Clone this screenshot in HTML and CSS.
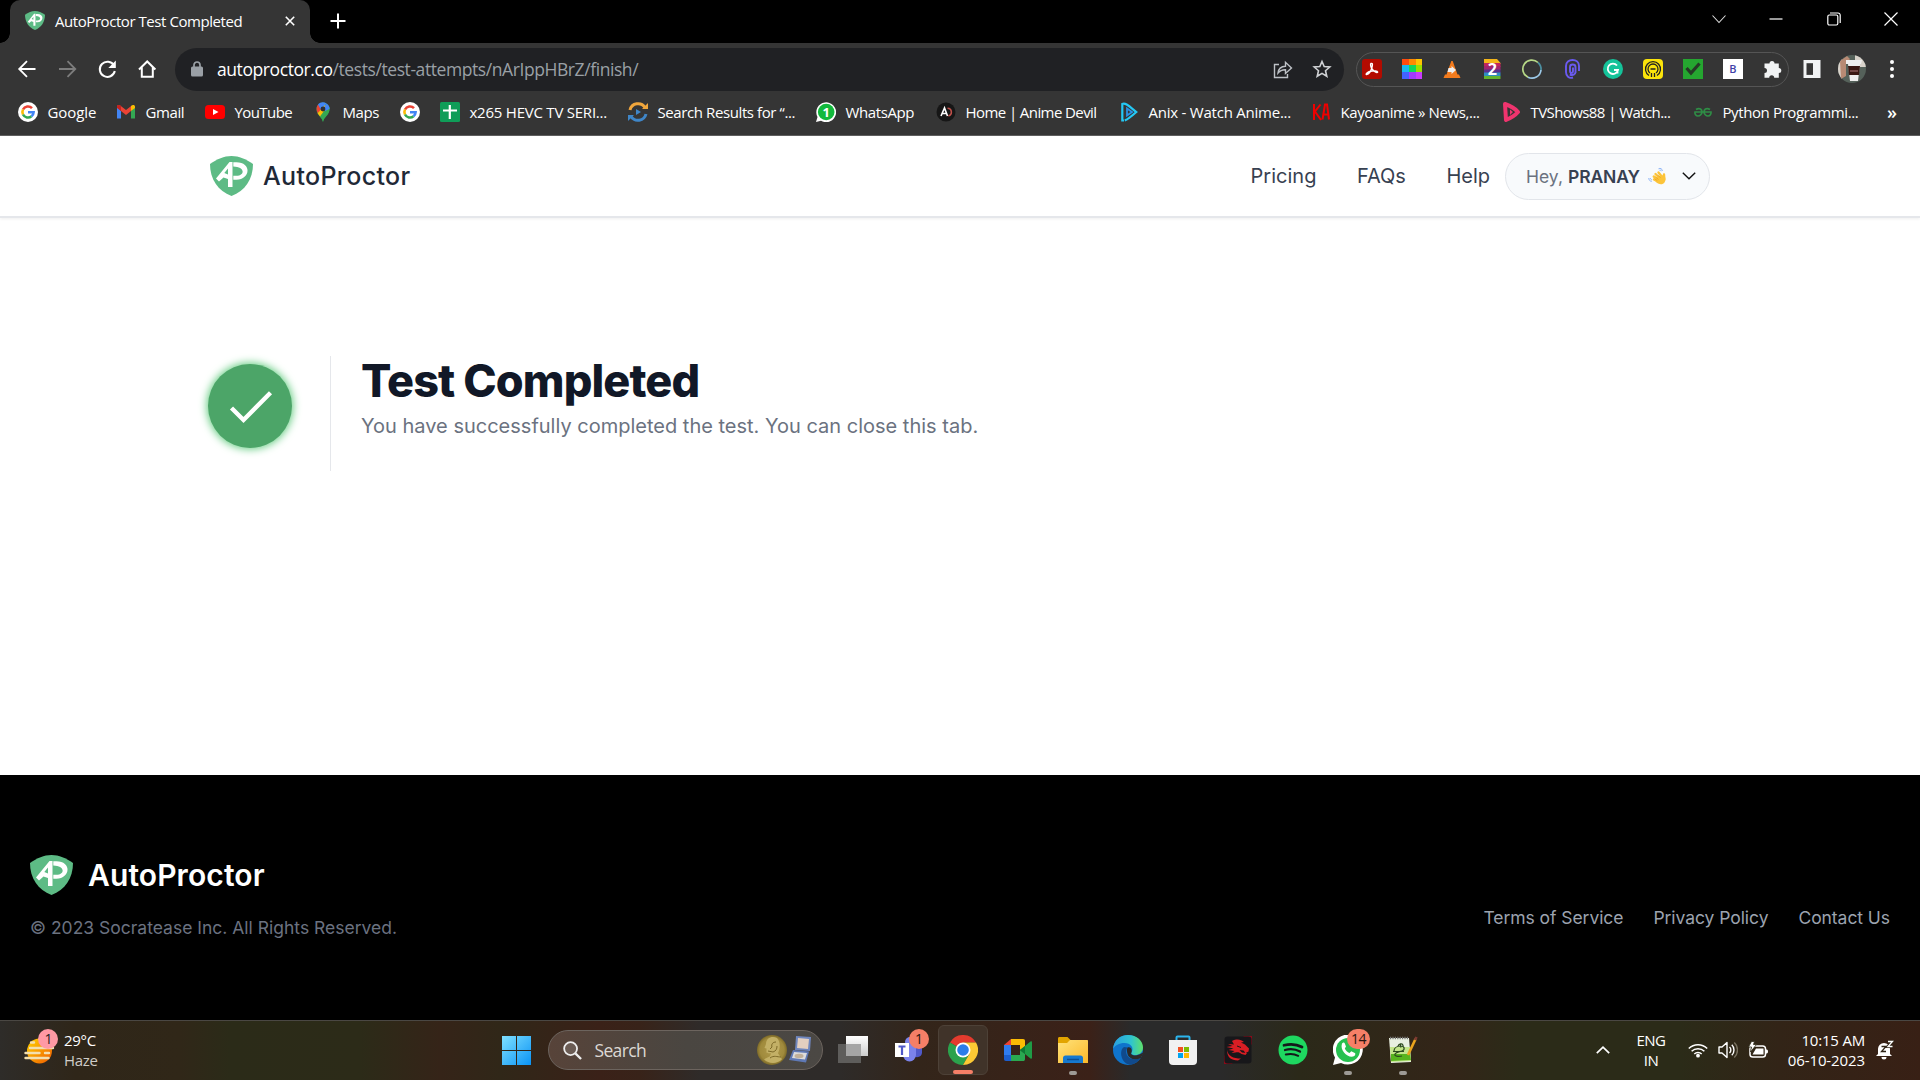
FILE: index.html
```html
<!DOCTYPE html>
<html lang="en">
<head>
<meta charset="utf-8">
<title>AutoProctor Test Completed</title>
<link rel="stylesheet" href="styles.css">
</head>
<body>
<svg class="defs" aria-hidden="true">
  <defs>
    <symbol id="shield" viewBox="0 0 43 40">
      <path d="M0 8C7 3 14 0 21.500 0S36 3 43 8c0 15-8 27-21.500 32C8 35 0 23 0 8z" fill="#5dbb85"/>
      <path d="M19.500 6h3v25H18v-8l-4.500-1.500-4.500 4-3-3zM18 12.500 14.300 17l3.700 1.500z" fill="#fff" fill-rule="evenodd"/>
      <path d="M23.300 6.200h3c15.500 0 14.500 17 0 17.600h-3v-4h3c9-.3 9-9-3-9.400z" fill="#fff"/>
    </symbol>
    <symbol id="google" viewBox="0 0 20 20">
      <circle cx="10" cy="10" r="10" fill="#fff"/>
      <g fill="none" stroke-width="2.600"><path d="M14 6.200A5.600 5.600 0 0 0 5 7.500" stroke="#ea4335"/><path d="M5 7.500a5.600 5.600 0 0 0 0 5" stroke="#fbbc05"/><path d="M5 12.500a5.600 5.600 0 0 0 8.500 1.800" stroke="#34a853"/><path d="M10 10.200h5.600a5.600 5.600 0 0 1-2.100 4.100" stroke="#4285f4"/></g>
    </symbol>
    <symbol id="chrome" viewBox="0 0 30 30">
      <path d="M15 15 2 7.500A15 15 0 0 1 28 7.500H15z" fill="#e33b2e"/>
      <path d="M15 15 2 7.500A15 15 0 0 0 15 30l6.500-11.200z" fill="#2ba24c"/>
      <path d="M15 7.500h13A15 15 0 0 1 15 30l6.500-11.200z" fill="#fcc934"/>
      <circle cx="15" cy="15" r="7.500" fill="#fff"/><circle cx="15" cy="15" r="5.800" fill="#2b7de9"/>
    </symbol>
  </defs>
</svg>

<div class="tabstrip">
  <div class="tab">
    <svg class="tab-icon" viewBox="0 0 43 40" preserveAspectRatio="none"><use href="#shield"/></svg>
    <span class="tab-title">AutoProctor Test Completed</span>
    <svg class="tab-close" viewBox="0 0 10 10"><path d="M.8.8l8.400 8.400M9.200.8.8 9.200" stroke="#fff" stroke-width="1.600"/></svg>
  </div>
  <svg class="tab-new" viewBox="0 0 16 16"><path d="M8 .5v15M.5 8h15" stroke="#fff" stroke-width="2"/></svg>
  <div class="window-controls">
    <svg viewBox="0 0 14 14"><path d="M.5 3.500 7 10.500l6.500-7" fill="none" stroke="#ddd" stroke-width="1.100"/></svg>
    <svg viewBox="0 0 14 14"><path d="M.5 7h13" stroke="#fff" stroke-width="1.200"/></svg>
    <svg viewBox="0 0 14 14"><g fill="none" stroke="#fff" stroke-width="1.200"><rect x=".8" y="3" width="10" height="10" rx="1.500"/><path d="M3 1h8a2.200 2.200 0 0 1 2.200 2.200V11"/></g></svg>
    <svg viewBox="0 0 14 14"><path d="M.5.5l13 13M13.500.5l-13 13" stroke="#fff" stroke-width="1.200"/></svg>
  </div>
</div>

<div class="toolbar">
  <svg class="tool" viewBox="0 0 40 40"><path d="M28.500 20h-16M20 12.200 12.200 20l7.800 7.800" fill="none" stroke="#fff" stroke-width="1.800"/></svg>
  <svg class="tool" viewBox="0 0 40 40"><path d="M12 20h16M20.500 12.200 28.300 20l-7.800 7.800" fill="none" stroke="#7d7d7d" stroke-width="1.800"/></svg>
  <svg class="tool" viewBox="0 0 40 40"><path d="M27 16.500A7.600 7.600 0 1 0 27.800 22" fill="none" stroke="#fff" stroke-width="2"/><path d="M28.800 11.500v7.500h-7.500z" fill="#fff"/></svg>
  <svg class="tool" viewBox="0 0 40 40"><path d="M12 20.500 20.200 12.500l8.200 8M14.800 18.500v9.300h11v-9.300" fill="none" stroke="#fff" stroke-width="2"/></svg>
  <div class="omnibox">
    <svg class="lock" viewBox="0 0 12 16"><rect y="5.500" width="12" height="10" rx="1.500" fill="#9aa0a6"/><path d="M3 6V4a3 3 0 0 1 6 0v2" fill="none" stroke="#9aa0a6" stroke-width="1.700"/></svg>
    <span class="url">autoproctor.co<span class="path">/tests/test-attempts/nArIppHBrZ/finish/</span></span>
    <svg class="omni-icon" viewBox="0 0 20 20"><path d="M6 5.500H1.500v13h13V15M5 14c.5-4.500 3.500-6.500 7.500-6.700V3.300L18.500 9l-6 5.500V10.700C9 10.600 7 11.500 5 14z" fill="none" stroke="#bdc1c6" stroke-width="1.400"/></svg>
    <svg class="omni-icon" viewBox="0 0 20 20"><path d="m10 2.500 2.200 5 5.600.5-4.300 3.700 1.300 5.600L10 14.400l-4.800 2.900 1.300-5.600L2.200 8l5.600-.5z" fill="none" stroke="#d0d2d5" stroke-width="1.600"/></svg>
  </div>
  <div class="extensions">
    <svg viewBox="0 0 24 24"><rect x="2" y="2" width="20" height="20" rx="3" fill="#b30b00"/><path d="M11 6.500c2-.5 1.500 2 .8 4.500C11 14 8.500 17 6.500 17.500c-1.200-.5 1-2.500 4-3.200 3.500-.8 7-.5 7.200.7-.5 1.500-4-.5-5.700-3C10.700 9.500 10 7 11 6.500z" fill="none" stroke="#fff" stroke-width="1.400"/></svg>
    <svg viewBox="0 0 24 24"><path fill="#ff4b0f" d="M2 2h7v7H2z"/><path fill="#ff8a00" d="M9 2h7v6H9z"/><path fill="#ffc400" d="M16 2h6v6h-6z"/><path fill="#18b8f0" d="M2 8h7v7H2z"/><path fill="#12d65c" d="M9 8h7v7H9z"/><path fill="#9be000" d="M16 8h6v7h-6z"/><path fill="#4263ff" d="M2 15h7v7H2z"/><path fill="#a13cff" d="M9 15h7v7H9z"/><path fill="#c93cff" d="M16 15h6v7h-6z"/></svg>
    <svg viewBox="0 0 24 24"><path d="M11.300 4h1.400l4.800 13.500h1.500l1.500 3.500H3.500L5 17.500h1.500z" fill="#f37b1d"/><path d="M8.500 11h3V9l4.500 4-4.500 4v-2H7.500z" fill="#eee"/></svg>
    <svg viewBox="0 0 24 24"><path fill="#f4b61a" d="M4 2h13l3.500 4v1H4z"/><path fill="#c2255c" d="M4 6h16.500v4H4z"/><path fill="#a0246e" d="M4 9h16.500v4H4z"/><path fill="#5b2f8e" d="M4 12.500h16.500V16H4z"/><path fill="#2f8fc0" d="M4 15.500h16.500V19H4z"/><path fill="#62b32e" d="M4 19h16.500v3H4z"/><text x="12.300" y="18" text-anchor="middle" class="ext-two">2</text></svg>
    <svg viewBox="0 0 24 24"><g fill="none" stroke-width="1.700"><path d="M18 5.500A9 9 0 1 0 8 20.200" stroke="#b7d987"/><path d="M8 20.200A9 9 0 0 0 21 13" stroke="#9cc9e8"/><path d="M18 5.500A9 9 0 0 1 21 13" stroke="#4c8fa0"/></g></svg>
    <svg viewBox="0 0 24 24"><path d="M15.500 16V10c0-1.500-1-2.500-2.800-2.500S10 8.500 10 10v4c0 2.500 3 2.500 3 0v-3.500M13 20.500C9 22 6 19 6 15V9c0-4 3-6 6.500-6S19 5 19 9v5M9.800 17.500c3 1.200 5.700 0 5.700-2.500" fill="none" stroke="#6a5af0" stroke-width="1.900"/></svg>
    <svg viewBox="0 0 24 24"><circle cx="12" cy="12" r="10" fill="#15c39a"/><path d="M16 8.500A5.200 5.200 0 1 0 17 13h-4M16.500 13v3.500" fill="none" stroke="#fff" stroke-width="1.800"/></svg>
    <svg viewBox="0 0 24 24"><rect x="2" y="2" width="20" height="20" rx="4" fill="#fbe40b"/><g fill="none" stroke="#222" stroke-width="1.300"><path d="M8 18.500a7.500 7.500 0 1 1 8 0"/><path d="M9 16a5 5 0 1 1 6 0"/><path d="M10.500 20v-4M13.500 20v-4M9.500 12h5"/></g></svg>
    <svg viewBox="0 0 24 24"><path fill="#25a630" d="M2 2h20v20H2z"/><path d="M5.500 11 10 16l8.500-9.500" fill="none" stroke="#263a26" stroke-width="3.200"/></svg>
    <svg viewBox="0 0 24 24"><path fill="#fff" d="M2 2h20v20H2z"/><text x="12" y="16" text-anchor="middle" class="ext-b">B</text></svg>
    <svg viewBox="0 0 24 24"><path d="M3.500 6.500h5a2.500 2.500 0 1 1 5 0h4.300V11a2.500 2.500 0 1 1 0 5v4.800h-4.600a2.500 2.500 0 0 0-5 0H3.500V16a2.500 2.500 0 0 0 0-5z" fill="#f1f3f4"/></svg>
  </div>
  <svg class="tool side" viewBox="0 0 40 40"><path d="M11.500 11h17v18h-17z" fill="#f1f3f4"/><path d="M14.500 14.200h6.500v11.700h-6.500z" fill="#353535"/></svg>
  <svg class="tool" viewBox="0 0 40 40"><clipPath id="av"><circle cx="20" cy="20" r="14"/></clipPath><g clip-path="url(#av)"><path fill="#55615a" d="M6 6h28v28H6z"/><path fill="#d8d2ca" d="M23 6h11v12H23zM6 6h4v28H6z"/><path fill="#b88a74" d="M8 12l7-5 3 3-4 5v12l-5 3z"/><path fill="#efeeee" d="M14 11h16l-1 4h-1l-2 17H18l-2-17h-2z"/><path fill="#3a1712" d="M16 17h12l-1 9H17z"/><path stroke="#a77" d="M18 22h8"/></g></svg>
  <svg class="tool" viewBox="0 0 40 40"><g fill="#fff"><circle cx="20" cy="13" r="2"/><circle cx="20" cy="20" r="2"/><circle cx="20" cy="27" r="2"/></g></svg>
</div>

<div class="bookmarks">
  <a class="bm wide-set"><svg><use href="#google"/></svg><span>Google</span></a>
  <a class="bm"><svg viewBox="0 0 20 20"><path d="M1 4v12.500h4V9z" fill="#4285f4"/><path d="M15 9v7.500h4V4z" fill="#34a853"/><path d="M1 4.500C1 3 3 2.500 4.500 3.800L10 8l5.500-4.200L15 9l-5 4-5-4z" fill="#ea4335"/><path d="M1 4.500C1 3 3.500 2.500 5 4v5L1 6z" fill="#c5221f"/><path d="M15 4c1.500-1.500 4-1 4 .5V6l-4 3z" fill="#fbbc04"/></svg><span>Gmail</span></a>
  <a class="bm tight"><svg viewBox="0 0 20 20"><rect y="3" width="20" height="14" rx="3.500" fill="#f00"/><path d="m8 7 5.500 3L8 13z" fill="#fff"/></svg><span>YouTube</span></a>
  <a class="bm"><svg viewBox="0 0 20 20"><path d="M10 20c-.8-5-6.500-6.500-6.500-13a6.500 6.500 0 0 1 13 0c0 6.500-5.700 8-6.500 13z" fill="#34a853"/><path d="M4.500 11C3 8 3.500 4 5.200 2.500L10 7z" fill="#ea4335"/><path d="M5 2.500C7 0 11-.5 13.500 1.500L8 8z" fill="#4285f4"/><path d="M4.600 11.200 12 3l3.500 5-8 7z" fill="#fbbc04"/><path d="M11 9l5.500-4c.5 5-2 7-4.500 10-1 1.500-1.500 3-2 5-.5-2-1.500-4-3-5.500z" fill="#34a853"/><path d="M10 7l3.500-5.500C16 3 16.500 5 16.500 7L12 9z" fill="#4285f4"/><circle cx="10" cy="7" r="2.400" fill="#303030"/></svg><span>Maps</span></a>
  <a class="bm"><svg><use href="#google"/></svg></a>
  <a class="bm loose"><svg viewBox="0 0 20 20"><rect width="20" height="20" rx="1.500" fill="#0f9d58"/><path d="M9.800 3v14M3 8.500h14" stroke="#fff" stroke-width="2.200"/></svg><span>x265 HEVC TV SERI...</span></a>
  <a class="bm"><svg viewBox="0 0 20 20"><path d="M2 8a8.300 8.300 0 0 1 15-2.500" fill="none" stroke="#f0a63c" stroke-width="3"/><path d="M18 12a8.300 8.300 0 0 1-15 2.500" fill="none" stroke="#3f86c8" stroke-width="3"/><path d="M14 7h6V1z" fill="#f0a63c"/><path d="M6 13H0v6z" fill="#3f86c8"/><path d="m8 7 5 3-5 3z" fill="#3f86c8"/></svg><span>Search Results for “...</span></a>
  <a class="bm"><svg viewBox="0 0 20 20"><path d="M0 20 1.500 15A9.900 9.900 0 1 1 5 18.700z" fill="#fff"/><circle cx="10.200" cy="10" r="8.300" fill="#12b93c"/><text x="10" y="15" text-anchor="middle" class="wa-one">1</text></svg><span>WhatsApp</span></a>
  <a class="bm tight"><svg viewBox="0 0 20 20"><circle cx="10" cy="10" r="9.500" fill="#161616"/><path d="M5 14 8.500 6l3 8M6.300 11.500h4" fill="none" stroke="#fff" stroke-width="1.600"/><path d="M11.500 6.200c5 0 5 7.500.8 7.500" fill="none" stroke="#c0504a" stroke-width="1.600"/></svg><span>Home | Anime Devil</span></a>
  <a class="bm loose"><svg viewBox="0 0 20 20"><path d="M5 18.500H3.300V2c3-1.500 6 1.500 14 8-5 4.500-8 7-11.500 8.500" fill="none" stroke="#24c8f5" stroke-width="2.200"/><path d="m8 6.500 5 3.500-5 3.500z" fill="none" stroke="#2a92e8" stroke-width="1.800"/></svg><span>Anix - Watch Anime...</span></a>
  <a class="bm"><svg viewBox="0 0 20 20"><path d="M3 2v16M9.500 2.500 4 9.500l6 8.500M11.500 17.500l2.500-15h2l2 15M12.500 12.500h5" fill="none" stroke="#f00000" stroke-width="2"/></svg><span>Kayoanime » News,...</span></a>
  <a class="bm tight"><svg viewBox="0 0 20 20"><path d="M4 2c6 2 10 4.500 13 8-3 3.500-7 6-12 8z" fill="none" stroke="#f0346e" stroke-width="4" stroke-linejoin="round"/><path d="M9 7.500 12 10l-3 3z" fill="#f0346e"/></svg><span>TVShows88 | Watch...</span></a>
  <a class="bm"><svg viewBox="0 0 20 20"><path d="M3 7.500C7 5 9 8 9 10s-2 4-4 4-3.500-2-3-4h16c.3 2-1 4-3 4s-4-2-4-4 2-5 6-2.500" fill="none" stroke="#2f8d46" stroke-width="1.700"/></svg><span>Python Programmi...</span></a>
  <span class="bm-more">»</span>
</div>

<header class="site-header">
  <svg class="logo"><use href="#shield"/></svg>
  <span class="brand">AutoProctor</span>
  <nav class="site-nav"><a>Pricing</a><a>FAQs</a><a>Help</a></nav>
  <div class="user-pill">
    <span class="hey">Hey,</span><strong>PRANAY</strong>
    <svg class="wave" viewBox="0 0 18 18"><g stroke="#fcc43a" stroke-linecap="round" stroke-width="2.400"><path d="m6 12.500 5 2.500M5.800 9.500l5 4M7.500 7l5 5M10.500 5.500l4 5M16 7.500l.3 5"/></g><path d="M9 10l5-2 3 2c1 3 0 6-2.500 7-2 .6-5 0-7-2.500z" fill="#fcc43a"/><path d="m7.500 10 3 2.500M9.500 7.800l3 3M6.800 12l2.500 1.500" stroke="#e79b1c" stroke-width=".7"/><path d="M10.500 1.800c2-1 3.500 0 4 2M11.500 3.200c1-.3 1.500 0 1.800 1M.8 11c0 2 1 3.200 3 3.300M2.400 11c0 1 .5 1.600 1.500 1.700" fill="none" stroke="#8db4f7" stroke-width="1"/></svg>
    <svg class="chev" viewBox="0 0 14 8"><path d="m.8.8 6.200 6 6.200-6" fill="none" stroke="#111" stroke-width="1.400"/></svg>
  </div>
</header>

<main class="result">
  <div class="badge"><svg viewBox="0 0 44 34"><path d="M2.500 18 14.500 30 41.500 2.800" fill="none" stroke="#fff" stroke-width="4.400"/></svg></div>
  <div class="message">
    <h1>Test Completed</h1>
    <p>You have successfully completed the test. You can close this tab.</p>
  </div>
</main>

<footer class="site-footer">
  <div>
    <div class="footer-brand"><svg class="logo"><use href="#shield"/></svg><span>AutoProctor</span></div>
    <p class="copyright">© 2023 Socratease Inc. All Rights Reserved.</p>
  </div>
  <nav class="footer-nav"><a>Terms of Service</a><a>Privacy Policy</a><a>Contact Us</a></nav>
</footer>

<div class="taskbar">
  <div class="weather">
    <svg viewBox="0 0 36 36"><defs><linearGradient id="sun" x1="0" y1="0" x2="1" y2="1"><stop offset="0" stop-color="#ffd400"/><stop offset="1" stop-color="#f05a00"/></linearGradient></defs><circle cx="15.500" cy="22" r="12.500" fill="url(#sun)"/><g stroke="#f3dfae" stroke-width="2.400" stroke-linecap="round"><path d="M7 13.500h3M6 19h23M1.500 24h14M21 24h4M1.500 29h23"/></g><circle cx="24" cy="10" r="10" fill="#ff99a4"/><text x="24.500" y="15" text-anchor="middle" class="count">1</text></svg>
    <div class="weather-text"><span>29°C</span><span class="haze">Haze</span></div>
  </div>
  <svg class="start" viewBox="0 0 29 29"><defs><linearGradient id="win" x1="0" y1="0" x2="29" y2="29" gradientUnits="userSpaceOnUse"><stop offset="0" stop-color="#7fe0ff"/><stop offset="1" stop-color="#0a93f5"/></linearGradient></defs><path fill="url(#win)" d="M0 0h14v14H0zM15 0h14v14H15zM0 15h14v14H0zM15 15h14v14H15z"/></svg>
  <div class="search">
    <svg class="mag" viewBox="0 0 20 20"><circle cx="8" cy="8" r="6.800" fill="#ffffff22" stroke="#eee" stroke-width="1.900"/><path d="m13 13 6 6" stroke="#eee" stroke-width="2.400"/></svg>
    <span>Search</span>
    <svg class="medal" viewBox="0 0 54 32"><defs><radialGradient id="gold"><stop offset="0" stop-color="#b09a4c"/><stop offset=".8" stop-color="#a08a3c"/><stop offset="1" stop-color="#7d6a28"/></radialGradient></defs><circle cx="15" cy="16" r="15" fill="url(#gold)"/><path d="M20 4c-5-2.500-11 0-11 6l-1.500 4 2 .5v4c1 1 3 .7 4.500.7l-1 3-6 3c5 5 13 5 18 0l-4-6c2-4 3-11-1-15.200z" fill="#c3b066"/><path d="M19 8c-3 0-5 2-4 5l-2 2M11 17l5 1c3-1 4-3 4-6M13 24c4-3 7-1 11-1" fill="none" stroke="#7d6a28"/><path d="m39 2 15 1-1 14-15-1z" fill="#6f86bd"/><path d="m41 4 11 1-1 10-11-1z" fill="#e3cfc0"/><path d="m36 16 16 1.500-3 11L32 26z" fill="#5f79b5"/><path d="m37 18 13 1-2 6.500-13-1.500z" fill="#dcdcdc"/><ellipse cx="42" cy="22" rx="4.500" ry="2.200" fill="#c0b09a"/></svg>
  </div>
  <div class="apps">
    <div class="app"><svg viewBox="0 0 30 30"><defs><linearGradient id="tv" x1="0" y1="0" x2="0" y2="1"><stop offset="0" stop-color="#fff"/><stop offset="1" stop-color="#ccc"/></linearGradient></defs><path fill="#5e5d5b" d="M0 9h23v19H0z"/><path fill="url(#tv)" d="M8 1h22v20H8z"/><path fill="#a5a5a5" d="M8 9h15v12H8z"/></svg></div>
    <div class="app"><svg viewBox="0 0 30 30"><circle cx="17" cy="7" r="5" fill="#7b83eb"/><path d="M20 11h9v7a5 5 0 0 1-9 2z" fill="#5059c9"/><path d="M10 11h13v9a6.500 6.500 0 0 1-13 0z" fill="#7b83eb"/><rect x="2" y="8" width="14" height="14" fill="#fff"/><path d="M5.500 11.500h7M9 11.500V20" stroke="#5059c9" stroke-width="2.200"/></svg><b class="bubble">1</b></div>
    <div class="app active"><svg><use href="#chrome"/></svg><i class="bar"></i></div>
    <div class="app"><svg viewBox="0 0 30 30"><path d="M8 4v6H1z" fill="#ea4335"/><path d="M1 10h7v10H1z" fill="#2f7cf0"/><path d="M1 20h7v6H3c-1.300 0-2-.7-2-2z" fill="#1c5fd0"/><path d="M8 4h12c1.500 0 2 .7 2 2v6l-5 3v-5H8z" fill="#fbbc04"/><path d="M8 20h9v-5l5 4v5c0 1.500-.7 2-2 2H8z" fill="#2aa851"/><path d="m17 15 10.500-8.500c.7-.5 1.500 0 1.500.8v15.500c0 .8-.8 1.200-1.500.7z" fill="#1f9c46"/><path d="m17 15 5-4v8z" fill="#0c7a35"/></svg></div>
    <div class="app"><svg viewBox="0 0 30 30"><path d="M0 3.500C0 2.500.7 2 1.500 2h8l3 3-2 4H0z" fill="#e2a400"/><defs><linearGradient id="fold" x1="0" y1="0" x2="1" y2="1"><stop offset="0" stop-color="#ffe27a"/><stop offset="1" stop-color="#fbb92a"/></linearGradient></defs><path d="M0 8h9l3-3h17c.7 0 1 .3 1 1v22H0z" fill="url(#fold)"/><path d="M5 28v-5c0-1.500 1-2.500 2.500-2.500h15c1.500 0 2.500 1 2.500 2.500v5z" fill="#1679cf"/><path d="M9 24.500h12" stroke="#0c4f94" stroke-width="1.500"/></svg><i class="dot"></i></div>
    <div class="app"><svg viewBox="0 0 30 30"><defs><linearGradient id="ed" x1="0" y1="0" x2="1" y2="0"><stop offset="0" stop-color="#2a9fe0"/><stop offset=".6" stop-color="#2fc4cf"/><stop offset="1" stop-color="#5fe06a"/></linearGradient></defs><circle cx="15" cy="15" r="15" fill="#0f74cc"/><path d="M0 14C1 5 7 0 15 0c9 0 15 6 15 12.500 0 5-4 7.500-8 7.500-3 0-4.500-1-3.500-2.500 3-5-1-9.500-7-9.500C6 8 2 10.500 0 14z" fill="url(#ed)"/><path d="M11 12c-5 3-3.500 16 6 17.800 4-.3 8-2.800 10.500-6.800-5 2.500-12 1.500-14-4-.6-2-.5-4.500 1-6.500z" fill="#104a8c"/><path d="M14.500 12.500c4-1 5 3 3.800 5.500-1 2 3 3.500 8 1.500l4.700-2.500-3.200 6c-6 3-12 .5-13.300-4-.7-2.500-.8-4.800 0-6.500z" fill="#2d2a28"/></svg></div>
    <div class="app"><svg viewBox="0 0 30 30"><path d="M8.500 6V2.500c0-.8.500-1 1-1h11c.6 0 1 .2 1 1V6" fill="none" stroke="#2bb5ee" stroke-width="2"/><path d="M1 5h28v21a4 4 0 0 1-4 4H5a4 4 0 0 1-4-4z" fill="#f1f1f1"/><path fill="#f25022" d="M10 12h5v5h-5z"/><path fill="#7fba00" d="M16 12h5v5h-5z"/><path fill="#00a4ef" d="M10 18h5v5h-5z"/><path fill="#ffb900" d="M16 18h5v5h-5z"/></svg></div>
    <div class="app"><svg viewBox="0 0 30 30"><path d="M20 1h9v9zM1 20v9h9z" fill="#8c0a18"/><rect x="1.500" y="1.500" width="27" height="27" rx="3" fill="#17171a"/><path d="M9 6c5-2.500 9-1.500 12 1l-3 .5 4 2 4 4-.5 3-3 1.500-2-2.500-4-.5 2.500 2.500L24 18l-1.500 2-4-1c-2-2-4-2-6-1.500l-4 .5 3-2-6-1 5-1.500-7-1.500 6-1L5 9l6 .5z" fill="#d91e24"/><path d="M4 15c1 6 6 8.500 14 8.500l-3 2C8 25.500 4 22 4 15z" fill="#d91e24"/><path d="m14 11 4 1.500" stroke="#17171a"/></svg></div>
    <div class="app"><svg viewBox="0 0 30 30"><circle cx="15" cy="15" r="14.500" fill="#1ed760"/><g fill="none" stroke="#14181a" stroke-linecap="round"><path d="M6 10.300c6-1.600 12.500-1.200 18 1.700" stroke-width="2.700"/><path d="M7 15c5-1.400 10.500-1 15 1.600" stroke-width="2.300"/><path d="M7.800 19.500c4.500-1.100 8.700-.7 12.400 1.300" stroke-width="2"/></g></svg></div>
    <div class="app"><svg viewBox="0 0 30 30"><path d="M0 30 2 22.500A15 15 0 1 1 8 28z" fill="#fff"/><circle cx="15" cy="15" r="12" fill="#27c150"/><path d="M9 8.500c1.500-1.500 2.500-1 3 .5l1 2.500-1.200 2c1 2 2.500 3.500 4.700 4.500l1.800-1.700 3.500 1.700c1 .5.500 2-.5 3-5 3.500-15-5-12.300-12.500z" fill="#fff"/></svg><b class="bubble wide">14</b><i class="dot"></i></div>
    <div class="app"><svg viewBox="0 0 30 30"><path d="M1 3h20l2 24-20 1z" fill="#e8efe0"/><path d="M2 12h20l1 14-20 1z" fill="#c3e58a"/><path d="M3 19h19l1 6-20 1z" fill="#57b41e"/><path d="M2 3h19" stroke="#777" stroke-width="2.500" stroke-dasharray="1.200 1.200"/><path d="M6 16c0-3 3-5 7-5s4 4 1 5-6 1-7 3 3 3 7 2M10 11c1-3 6-3 5 1M5 16.500h11M12 8.500l1 4" fill="none" stroke="#2c4a1e" stroke-width="1.200"/><path d="M20 20 27.500 4" stroke="#e9a41d" stroke-width="2.600"/><path d="m27 5 1.500-3" stroke="#7c3a32" stroke-width="2.600"/></svg><i class="dot"></i></div>
  </div>
  <div class="tray">
    <svg class="up" viewBox="0 0 14 8"><path d="m.8 7.200 6.200-6 6.200 6" fill="none" stroke="#fff" stroke-width="1.700"/></svg>
    <div class="lang"><span>ENG</span><span>IN</span></div>
    <svg class="wifi" viewBox="0 0 20 16"><g fill="none" stroke="#fff" stroke-width="1.500"><path d="M.8 6.500a13 13 0 0 1 18.400 0M3.600 9.300a9 9 0 0 1 12.800 0M6.300 12a5.300 5.300 0 0 1 7.400 0"/></g><circle cx="10" cy="13.700" r="1.900" fill="#fff"/></svg>
    <svg class="vol" viewBox="0 0 20 18"><path d="M1 6h3l5-4.500v15L4 12H1z" fill="none" stroke="#fff" stroke-width="1.400" stroke-linejoin="round"/><path d="M11.500 6a4 4 0 0 1 0 6M13.800 3.800a7.300 7.300 0 0 1 0 10.400" fill="none" stroke="#fff" stroke-width="1.400"/><path d="M16.300 1.500a10.500 10.500 0 0 1 0 15" fill="none" stroke="#77705f" stroke-width="1.400"/></svg>
    <svg class="bat" viewBox="0 0 20 18"><rect x="2" y="5" width="15.500" height="11" rx="2.800" fill="none" stroke="#fff" stroke-width="1.500"/><path d="M8 7.500h7.500v6H4.500z" fill="#fff"/><path d="M18 8.500c1.500 0 2 .5 2 2s-.5 2-2 2z" fill="#fff"/><path d="M3.500.5h3l-1 3h3L2.500 11l1-5H.5z" fill="#fff" stroke="#2c2a18" stroke-width=".8"/></svg>
    <div class="clock"><span>10:15 AM</span><span class="date">06-10-2023</span></div>
    <svg class="bell" viewBox="0 0 18 20"><path d="M2 14V9a6 6 0 0 1 12 0v5l2 2H0zM5.500 17h5a2.500 2.500 0 0 1-5 0z" fill="#fff"/><path d="M5.500 6.500h4.500l-4.500 5h4.500" fill="none" stroke="#2f2417" stroke-width="1.300"/><path d="M12 1.500h4.500l-4.500 5h4.500" fill="none" stroke="#2f2417" stroke-width="3"/><path d="M12 1.500h4.500l-4.500 5h4.500" fill="none" stroke="#fff" stroke-width="1.300"/></svg>
  </div>
</div>
</body>
</html>
```
FILE: styles.css
```css
* { box-sizing: border-box; }
body {
  margin: 0;
  width: 1920px;
  height: 1080px;
  overflow: hidden;
  display: flex;
  flex-direction: column;
  background: #fff;
  font-family: Inter, "Liberation Sans", sans-serif;
}
svg { display: block; flex: none; }
p, h1 { margin: 0; }
.defs { position: absolute; width: 0; height: 0; }
.tabstrip, .toolbar, .bookmarks, .taskbar { font-family: "Open Sans", "Noto Sans", sans-serif; color: #fff; }

/* Browser tabs */
.tabstrip { flex: none; height: 43px; display: flex; align-items: center; background: #000; padding-left: 10px; }
.tab { position: relative; width: 300px; height: 43px; display: flex; align-items: center; padding: 0 15px 2px; background: #353535; border-radius: 10px 10px 0 0; }
.tab::before, .tab::after { content: ""; position: absolute; bottom: 0; width: 10px; height: 10px; }
.tab::before { left: -10px; background: radial-gradient(circle at 0 0, #000 9.5px, #353535 10px); }
.tab::after { right: -10px; background: radial-gradient(circle at 100% 0, #000 9.5px, #353535 10px); }
.tab-icon { width: 20px; height: 19px; }
.tab-title { margin-left: 10px; font-size: 15px; letter-spacing: -.44px; white-space: nowrap; }
.tab-close { width: 10px; height: 10px; margin-left: auto; }
.tab-new { width: 16px; height: 16px; margin: 0 0 1px 19.500px; }
.window-controls { margin: 0 22px 6px auto; display: flex; gap: 43.500px; }
.window-controls svg { width: 14px; height: 14px; }

/* Toolbar */
.toolbar { flex: none; height: 52px; display: flex; align-items: center; padding: 0 8px 0 7px; background: #353535; }
.tool { width: 40px; height: 40px; }
.side { margin-left: 3px; }
.omnibox { width: 1169px; height: 43px; margin-left: 8px; display: flex; align-items: center; padding: 0 12px 0 16px; border-radius: 22px; background: #202124; }
.lock { width: 12px; height: 16px; }
.url { margin: 0 auto 0 14px; font-size: 17.500px; letter-spacing: -.42px; white-space: nowrap; }
.path { color: #9aa0a6; }
.omni-icon { width: 20px; height: 20px; margin-left: 19px; }
.extensions { width: 433px; height: 35px; margin-left: 12px; padding: 0 3px; display: flex; align-items: center; justify-content: space-between; border: 1px solid #555; border-radius: 18px; }
.extensions svg { width: 24px; height: 24px; }
.ext-two { font: 700 16px "Open Sans", sans-serif; fill: #fff; }
.ext-b { font: 600 11px "Open Sans", sans-serif; fill: #3f3fa8; }

/* Bookmarks */
.bookmarks { flex: none; height: 41px; padding: 0 0 6px 18px; display: grid; align-items: center; grid-template-columns: 98px 89px 108px 87px 40px 188px 188px 120px 183px 192px 190px 192px 194px auto; background: #353535; border-bottom: 1px solid #5f5f5f; font-size: 15px; letter-spacing: -.4px; }
.bm { display: flex; align-items: center; gap: 9.500px; white-space: nowrap; }
.bm svg { width: 20px; height: 20px; }
.wide-set { letter-spacing: -.1px; }
.loose { letter-spacing: -.23px; }
.tight { letter-spacing: -.58px; }
.bm-more { font-size: 18px; font-weight: 600; }
.wa-one { font: 700 13px "Open Sans", sans-serif; fill: #fff; }

/* Site header */
.site-header { flex: none; height: 82px; padding: 0 210px; display: flex; align-items: center; border-bottom: 2px solid #e5e7eb; box-shadow: 0 1px 3px #0001; }
.logo { width: 43px; height: 40px; }
.brand { margin-left: 10px; font-size: 25px; font-weight: 500; letter-spacing: .33px; color: #1f2937; }
.site-nav { margin-left: auto; display: flex; gap: 40.500px; font-size: 20px; color: #374151; }
.user-pill { width: 205px; height: 47px; margin-left: 15px; padding-left: 20px; display: flex; align-items: center; border: 1px solid #e2e5ea; border-radius: 24px; background: #f8fafc; font-size: 17.500px; color: #374151; }
.hey { color: #6b7280; margin-right: 5px; }
.user-pill strong { font-weight: 600; letter-spacing: -.1px; }
.wave { width: 18px; height: 18px; margin-left: 8px; }
.chev { width: 14px; height: 8px; margin-left: 16px; }

/* Result message */
.result { height: 557px; padding: 138px 207px 0; display: flex; align-items: flex-start; }
.badge { width: 84px; height: 84px; margin: 8px 0 0 1px; padding: 2px 0 0 2px; display: flex; align-items: center; justify-content: center; border-radius: 50%; background: #4ca568; box-shadow: 0 0 8px 1px #5cc97a; }
.badge svg { width: 44px; height: 34px; }
.message { height: 115px; margin-left: 38px; padding-left: 30px; border-left: 1px solid #e5e7eb; }
.message h1 { font-size: 45px; line-height: 50px; font-weight: 800; letter-spacing: -.9px; color: #111827; }
.message p { font-size: 20px; line-height: 30px; margin-top: 5px; color: #6b7280; white-space: nowrap; }

/* Site footer */
.site-footer { flex: none; height: 245px; padding: 80px 30px 0; display: flex; justify-content: space-between; background: #000; }
.footer-brand { display: flex; align-items: center; gap: 15px; color: #fff; font-size: 30px; line-height: 40px; font-weight: 600; letter-spacing: .1px; }
.copyright { margin-top: 20px; font-size: 17.500px; line-height: 25px; color: #6b7280; }
.footer-nav { display: flex; gap: 30px; padding-top: 50px; font-size: 17.500px; line-height: 25px; letter-spacing: -.06px; color: #9ca3af; }

/* Taskbar */
.taskbar { flex: none; height: 60px; display: flex; align-items: center; border-top: 1px solid #4a4743; background: linear-gradient(90deg, #2e2c29 0, #2f2619 75px, #302718 180px, #2b2b18 230px, #2c2b18 360px, #352418 440px, #302718 500px, #3a2118 600px, #382319 640px, #2f2b29 700px, #2e2b29 840px, #33251a 920px, #3b2118 1090px, #2a2a2a 1130px, #2a2a2a 1220px, #2b2919 1300px, #332518 1450px, #2b2b18 1520px, #2b2b18 1680px, #322417 1780px, #382015 1920px); }
.weather { width: 502px; padding: 0 0 0 24px; display: flex; align-items: center; }
.weather svg { width: 36px; height: 36px; margin-bottom: 7px; overflow: visible; }
.count { font: 14px "Open Sans", sans-serif; fill: #222; }
.weather-text { margin: 0 0 2px 4px; display: flex; flex-direction: column; font-size: 15px; line-height: 20px; letter-spacing: -.3px; }
.haze { color: #cfccc8; }
.start { width: 29px; height: 29px; margin-bottom: 1px; }
.search { width: 275px; height: 40px; margin: 0 0 1px 17px; padding: 0 11px 0 14px; display: flex; align-items: center; border: 1px solid #6c645e; border-radius: 20px; background: linear-gradient(90deg, #574339, #4a4641 50%, #4b4844); font-size: 17.500px; letter-spacing: -.65px; color: #dcd8d4; }
.mag { width: 19px; height: 19px; margin-right: 12.500px; }
.medal { width: 54px; height: 32px; margin-left: auto; }
.apps { display: flex; margin: 0 0 1px 2px; }
.app { position: relative; width: 55px; height: 50px; display: flex; align-items: center; justify-content: center; }
.app svg { width: 30px; height: 30px; }
.active { width: 50px; margin: 0 2.500px; border: 1px solid #4d4137; border-radius: 6px; background: #403329; }
.bar, .dot { position: absolute; bottom: 0; left: 50%; height: 4px; border-radius: 2px; transform: translateX(-50%); }
.bar { width: 20px; background: #f57f67; }
.dot { width: 8px; background: #9d9a95; }
.bubble { position: absolute; top: 4px; right: 6px; width: 20px; height: 20px; border-radius: 10px; background: #f57f67; color: #2a1510; font-size: 14px; line-height: 20px; font-weight: 400; text-align: center; }
.wide { width: 23px; right: 5px; letter-spacing: -.5px; }
.tray { margin: 0 0 2px auto; padding-right: 26px; display: flex; align-items: center; font-size: 15px; line-height: 20px; letter-spacing: -.2px; }
.up { width: 14px; height: 8px; }
.lang { width: 40px; margin: 1px 0 0 21px; text-align: center; display: flex; flex-direction: column; letter-spacing: -.5px; }
.wifi { width: 20px; height: 16px; margin-left: 17px; }
.vol { width: 20px; height: 18px; margin-left: 10px; }
.bat { width: 20px; height: 18px; margin-left: 10px; }
.clock { width: 78px; margin-left: 19px; display: flex; flex-direction: column; text-align: right; }
.date { letter-spacing: -.1px; }
.bell { width: 18px; height: 20px; margin-left: 11px; }
```
